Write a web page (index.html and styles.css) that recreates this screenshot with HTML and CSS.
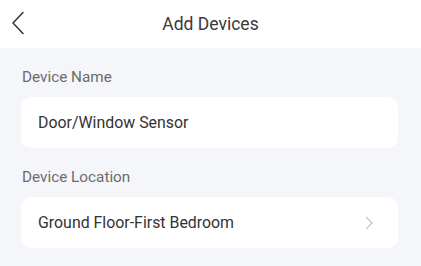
FILE: index.html
```html
<!DOCTYPE html>
<html lang="en">
<head>
<meta charset="utf-8">
<title>Add Devices</title>
<link rel="stylesheet" href="styles.css">
</head>
<body>
<div class="page">
  <header class="topbar">
    <span class="back" aria-label="Back">
      <svg width="14" height="24" viewBox="0 0 14 24"><path d="M12 1.5 L2 12 L12 22.5" fill="none" stroke="#333" stroke-width="1.5" stroke-linecap="round" stroke-linejoin="round"/></svg>
    </span>
    <h1 class="title">Add Devices</h1>
  </header>
  <main class="content">
    <div class="label">Device Name</div>
    <div class="card"><span class="value">Door/Window Sensor</span></div>
    <div class="label">Device Location</div>
    <div class="card"><span class="value">Ground Floor-First Bedroom</span>
      <svg class="chev" width="9" height="14" viewBox="0 0 9 14"><path d="M1.5 1.5 L7 7 L1.5 12.5" fill="none" stroke="#c4c4c8" stroke-width="1.3" stroke-linecap="round" stroke-linejoin="round"/></svg>
    </div>
  </main>
</div>
</body>
</html>
```
FILE: styles.css
```css
* { box-sizing: border-box; }
html, body { margin: 0; padding: 0; }
body {
  font-family: Roboto, "Liberation Sans", sans-serif;
  background: #f5f6fa;
  width: 421px;
  height: 266px;
  overflow: hidden;
}
.topbar {
  position: relative;
  height: 48px;
  background: #ffffff;
  display: flex;
  align-items: center;
  justify-content: center;
}
.back {
  position: absolute;
  left: 11px;
  top: 11px;
  width: 14px;
  height: 24px;
  display: flex;
}
.title {
  margin: 0;
  font-size: 17.5px;
  font-weight: 400;
  color: #3a3a3a;
  line-height: 20px;
}
.content {
  padding: 0 23px 0 21px;
}
.label {
  padding: 19px 0 10px 1px;
  font-size: 15.3px;
  line-height: 20px;
  color: #6b6b6b;
}
.card {
  height: 51px;
  background: #ffffff;
  border-radius: 10px;
  display: flex;
  align-items: center;
  justify-content: space-between;
  padding: 0 24px 0 17px;
}
.value {
  font-size: 15.9px;
  color: #333333;
  line-height: 20px;
}
.chev { display: block; }
```
